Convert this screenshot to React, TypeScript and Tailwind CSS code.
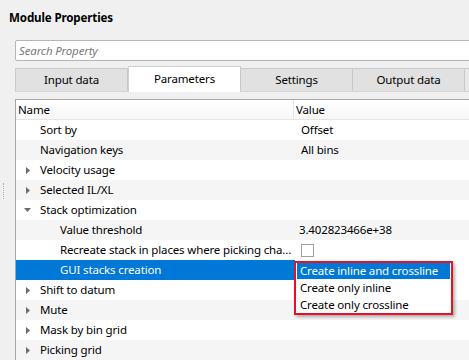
import React from "react";

type Row = {
  label: string;
  value?: string;
  child?: boolean;
  arrow?: "right" | "down";
  checkbox?: boolean;
  selected?: boolean;
};

const rows: Row[] = [
  { label: "Sort by", value: "Offset" },
  { label: "Navigation keys", value: "All bins" },
  { label: "Velocity usage", arrow: "right" },
  { label: "Selected IL/XL", arrow: "right" },
  { label: "Stack optimization", arrow: "down" },
  { label: "Value threshold", value: "3.402823466e+38", child: true },
  { label: "Recreate stack in places where picking cha...", child: true, checkbox: true },
  { label: "GUI stacks creation", child: true, selected: true },
  { label: "Shift to datum", arrow: "right" },
  { label: "Mute", arrow: "right" },
  { label: "Mask by bin grid", arrow: "right" },
  { label: "Picking grid", arrow: "right" },
];

const tabs = ["Input data", "Parameters", "Settings", "Output data"];

function Arrow({ dir }: { dir: "right" | "down" }) {
  if (dir === "down") {
    return (
      <svg width="7" height="4" viewBox="0 0 7 4" className="-ml-[2px]">
        <path d="M0 0 L7 0 L3.5 4 Z" fill="#6d6d6d" />
      </svg>
    );
  }
  return (
    <svg width="4" height="7" viewBox="0 0 4 7">
      <path d="M0 0 L4 3.5 L0 7 Z" fill="#6d6d6d" />
    </svg>
  );
}

export default function App() {
  return (
    <div
      className="relative w-[469px] h-[360px] overflow-hidden bg-[#f0f0f0] text-[11.5px] tracking-[-0.15px] text-black flex flex-col"
      style={{ fontFamily: '"Noto Sans", "DejaVu Sans", sans-serif' }}
    >
      {/* Titre */}
      <div className="h-[40px] pl-[9px] pt-[9px] font-bold text-[11.6px] leading-[18px] shrink-0">Module Properties</div>

      <div className="flex flex-1 min-h-0">
        {/* poignée du splitter */}
        <div className="w-[15px] shrink-0 flex flex-col items-start">
          <div className="mt-[143px] ml-[3px] h-[16px] border-l border-dotted border-[#b0b0b0]" />
        </div>

        <div className="w-[480px] shrink-0 flex flex-col">
          {/* Recherche */}
          <div className="h-[22px] bg-white border border-[#b5b5b5] rounded-[2px] pl-[3px] flex items-center italic text-[#7a7a7a]">
            Search Property
          </div>

          {/* Onglets */}
          <div className="mt-[6px] h-[25px] flex items-end border-b border-[#d6d6d6]">
            {tabs.map((t) =>
              t === "Parameters" ? (
                <div
                  key={t}
                  className="w-[113px] h-[26px] -mb-[1px] bg-white border border-b-0 border-[#d0d0d0] flex items-center justify-center pb-[2px]"
                >
                  {t}
                </div>
              ) : (
                <div
                  key={t}
                  className="w-[113px] h-[23px] bg-[#e1e1e1] border border-[#c9c9c9] border-b-0 -ml-[1px] first:ml-0 flex items-center justify-center"
                >
                  {t}
                </div>
              )
            )}
            <div className="w-[20px] h-[23px] bg-[#e8e8e8] border border-[#c9c9c9] border-b-0 -ml-[1px]" />
          </div>

          {/* Tableau */}
          <div className="mt-[7px] flex-1 bg-white border-l border-t border-[#a7a7a7] flex flex-col">
            <div className="h-[20px] flex shrink-0 bg-gradient-to-b from-white to-[#f7f7f7] border-b border-[#e5e5e5]">
              <div className="w-[278px] pl-[2px] border-r border-[#e5e5e5] flex items-center">Name</div>
              <div className="pl-[2px] flex items-center">Value</div>
            </div>
            {rows.map((r, i) => (
              <div key={i} className={`h-[20px] flex shrink-0 ${i % 2 === 1 ? "bg-[#f5f5f5]" : "bg-white"}`}>
                <div
                  className={`w-[279px] flex items-center whitespace-nowrap overflow-hidden ${
                    r.selected ? "bg-[#0078d7] text-white" : ""
                  } ${r.child ? "pl-[44px]" : "pl-[10px]"}`}
                >
                  {!r.child && (
                    <div className="w-[14px] shrink-0 flex items-center">{r.arrow && <Arrow dir={r.arrow} />}</div>
                  )}
                  <span>{r.label}</span>
                </div>
                <div className={`flex-1 flex items-center pl-[4px] ${r.selected ? "bg-white" : ""}`}>
                  {r.value && <span className={r.value.startsWith("3.") ? "" : "pl-[2px]"}>{r.value}</span>}
                  {r.checkbox && <div className="ml-[2px] w-[13px] h-[13px] bg-white border border-[#a0a0a0]" />}
                </div>
              </div>
            ))}
          </div>
        </div>
      </div>

      {/* Liste déroulante ouverte */}
      <div className="absolute left-[294px] top-[261px] w-[159px] border-2 border-[#e81123] bg-white shadow-[2px_2px_3px_rgba(0,0,0,0.3)] px-[1px]">
        <div className="h-[16px] bg-[#0078d7] text-white pl-[3px] flex items-center whitespace-nowrap">
          Create inline and crossline
        </div>
        <div className="h-[17px] pl-[3px] flex items-center whitespace-nowrap">Create only inline</div>
        <div className="h-[17px] pl-[3px] flex items-center whitespace-nowrap">Create only crossline</div>
      </div>
    </div>
  );
}
